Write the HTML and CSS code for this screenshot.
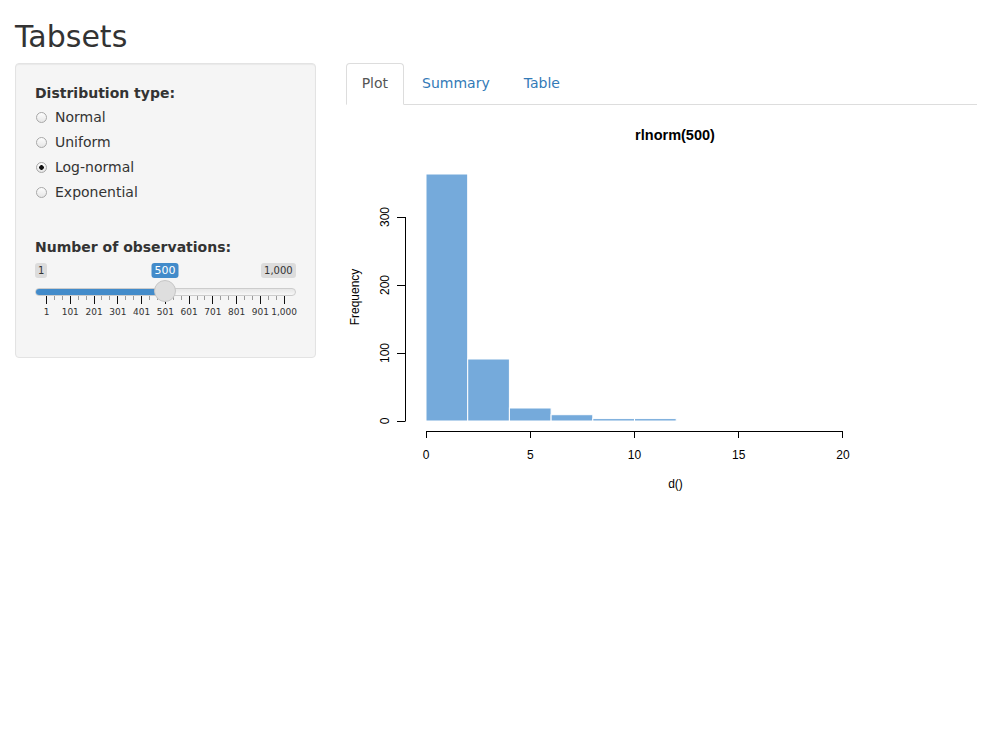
FILE: index.html
```html
<!DOCTYPE html>
<html lang="en">
<head>
<meta charset="utf-8">
<title>Tabsets</title>
<link rel="stylesheet" href="styles.css">
</head>
<body>
<div class="container">
  <h2 class="title">Tabsets</h2>
  <div class="row">
    <div class="sidebar">
      <form class="well">
        <div class="form-group radio-group">
          <label class="control-label">Distribution type:</label>
          <div class="options">
            <label class="radio"><input type="radio" name="dist" value="norm"><span>Normal</span></label>
            <label class="radio"><input type="radio" name="dist" value="unif"><span>Uniform</span></label>
            <label class="radio"><input type="radio" name="dist" value="lnorm" checked><span>Log-normal</span></label>
            <label class="radio"><input type="radio" name="dist" value="exp"><span>Exponential</span></label>
          </div>
        </div>
        <div class="form-group slider-group">
          <label class="control-label">Number of observations:</label>
          <div class="irs">
            <div class="irs-labels"><span class="irs-min">1</span><span class="irs-max">1,000</span></div>
            <div class="irs-line"><div class="irs-bar" style="width:130px"></div></div>
            <div class="irs-grid">
              <i class="pol big"></i><i class="pol"></i><i class="pol"></i>
              <i class="pol big"></i><i class="pol"></i><i class="pol"></i>
              <i class="pol big"></i><i class="pol"></i><i class="pol"></i>
              <i class="pol big"></i><i class="pol"></i><i class="pol"></i>
              <i class="pol big"></i><i class="pol"></i><i class="pol"></i>
              <i class="pol big"></i><i class="pol"></i><i class="pol"></i>
              <i class="pol big"></i><i class="pol"></i><i class="pol"></i>
              <i class="pol big"></i><i class="pol"></i><i class="pol"></i>
              <i class="pol big"></i><i class="pol"></i><i class="pol"></i>
              <i class="pol big"></i><i class="pol"></i><i class="pol"></i>
              <i class="pol big"></i>
            </div>
            <div class="irs-grid-text">
              <span><b>1</b></span><span><b>101</b></span><span><b>201</b></span><span><b>301</b></span><span><b>401</b></span><span><b>501</b></span><span><b>601</b></span><span><b>701</b></span><span><b>801</b></span><span><b>901</b></span><span><b>1,000</b></span>
            </div>
            <span class="irs-single" style="left:130px">500</span>
            <span class="irs-handle" style="left:119px"></span>
          </div>
        </div>
      </form>
    </div>
    <div class="main">
      <ul class="nav-tabs">
        <li class="active"><a href="#plot">Plot</a></li>
        <li><a href="#summary">Summary</a></li>
        <li><a href="#table">Table</a></li>
      </ul>
      <div class="tab-content">
        <svg class="plot" width="631" height="400" viewBox="0 0 631 400" xmlns="http://www.w3.org/2000/svg">
          <text class="plot-title" x="329" y="35" text-anchor="middle">rlnorm(500)</text>
          <g class="bars">
            <rect x="80" y="69" width="41.7" height="247"/>
            <rect x="121.7" y="254" width="41.7" height="62"/>
            <rect x="163.4" y="303" width="41.7" height="13"/>
            <rect x="205.1" y="309.7" width="41.7" height="6.3"/>
            <rect x="246.8" y="313.6" width="41.7" height="2.4"/>
            <rect x="288.5" y="313.6" width="41.7" height="2.4"/>
          </g>
          <g class="axis">
            <path d="M59.5 112 V316 M51 112.5 H59.5 M51 180.5 H59.5 M51 248.5 H59.5 M51 316.5 H59.5"/>
            <path d="M80 326.5 H497 M80.5 326 V333 M184.5 326 V333 M288.5 326 V333 M392.5 326 V333 M496.5 326 V333"/>
          </g>
          <g class="tick-labels">
            <text transform="translate(43,316) rotate(-90)" text-anchor="middle">0</text>
            <text transform="translate(43,248) rotate(-90)" text-anchor="middle">100</text>
            <text transform="translate(43,180) rotate(-90)" text-anchor="middle">200</text>
            <text transform="translate(43,112) rotate(-90)" text-anchor="middle">300</text>
            <text x="80" y="354" text-anchor="middle">0</text>
            <text x="184.25" y="354" text-anchor="middle">5</text>
            <text x="288.5" y="354" text-anchor="middle">10</text>
            <text x="392.75" y="354" text-anchor="middle">15</text>
            <text x="497" y="354" text-anchor="middle">20</text>
            <text x="329.5" y="383" text-anchor="middle">d()</text>
            <text transform="translate(13,192) rotate(-90)" text-anchor="middle">Frequency</text>
          </g>
        </svg>
      </div>
    </div>
  </div>
</div>
</body>
</html>
```

FILE: styles.css
```css
* { box-sizing: border-box; }

html, body {
  margin: 0;
  padding: 0;
  background: #fff;
}

body {
  font-family: "DejaVu Sans", "Liberation Sans", sans-serif;
  font-size: 14px;
  line-height: 20px;
  color: #333;
}

.container {
  padding: 0 15px;
}

.title {
  margin: 20px 0 10px;
  font-size: 30px;
  font-weight: 500;
  line-height: 33px;
}

.row {
  display: grid;
  grid-template-columns: calc(33.3333% - 20px) 1fr;
  column-gap: 30px;
  align-items: start;
}

/* ---------- sidebar well ---------- */
.well {
  margin: 0;
  padding: 19px;
  background: #f5f5f5;
  border: 1px solid #e3e3e3;
  border-radius: 4px;
  box-shadow: inset 0 1px 1px rgba(0, 0, 0, .05);
}

.control-label {
  display: block;
  font-weight: bold;
  margin-bottom: 5px;
}

.radio-group .control-label {
  margin-bottom: 4px;
}

.options {
  display: flex;
  flex-direction: column;
  gap: 5px;
}

.radio {
  display: flex;
  align-items: center;
  height: 20px;
  font-weight: normal;
  cursor: pointer;
}

.radio input {
  -webkit-appearance: none;
  appearance: none;
  width: 11px;
  height: 11px;
  margin: 0 8px 0 1px;
  border: 1px solid #a8a8a8;
  border-radius: 50%;
  background: linear-gradient(#fdfdfd, #e6e6e6);
  flex: none;
}

.radio input:checked {
  background: radial-gradient(circle, #111 0, #111 2px, rgba(0, 0, 0, 0) 2.6px), linear-gradient(#fdfdfd, #e6e6e6);
}

.slider-group {
  margin-top: 35px;
}

.slider-group .control-label {
  margin-bottom: 6px;
}

/* ---------- range slider ---------- */
.irs {
  position: relative;
  height: 60px;
  margin-bottom: 15px;
}

.irs-labels {
  display: flex;
  justify-content: space-between;
  height: 15px;
}

.irs-min,
.irs-max {
  font-size: 10px;
  line-height: 13px;
  padding: 1px 3px;
  background: rgba(0, 0, 0, .1);
  border-radius: 3px;
  color: #333;
}

.irs-single {
  position: absolute;
  top: 0;
  transform: translateX(-50%);
  font-size: 11px;
  line-height: 13px;
  padding: 1px 3px;
  background: #428bca;
  color: #fff;
  border-radius: 3px;
}

.irs-line {
  margin-top: 10px;
  height: 8px;
  border: 1px solid #ccc;
  border-radius: 16px;
  background: linear-gradient(to bottom, #dedede -50%, #fff 150%);
  overflow: hidden;
}

.irs-bar {
  background: #428bca;
  margin: -1px 0 0 -1px;
  height: 8px;
  border-radius: 8px 0 0 8px;
}

.irs-handle {
  position: absolute;
  top: 17px;
  width: 22px;
  height: 22px;
  border: 1px solid #c6c6c6;
  border-radius: 50%;
  background: #dedede;
}

.irs-grid {
  display: flex;
  justify-content: space-between;
  align-items: flex-start;
  margin: 0 11px;
  height: 8px;
}

.pol {
  display: block;
  width: 1px;
  height: 4px;
  background: #9a9a9a;
}

.pol.big {
  height: 8px;
  background: #111;
}

.irs-grid-text {
  display: flex;
  justify-content: space-between;
  margin: 4px 11px 0;
  font-size: 9px;
  line-height: 9px;
  color: #333;
}

.irs-grid-text span {
  width: 1px;
  display: flex;
  justify-content: center;
}

.irs-grid-text b {
  font-weight: normal;
  white-space: nowrap;
}

/* ---------- tabs ---------- */
.nav-tabs {
  display: flex;
  margin: 0;
  padding: 0;
  list-style: none;
  border-bottom: 1px solid #ddd;
}

.nav-tabs li {
  margin-bottom: -1px;
}

.nav-tabs a {
  display: block;
  padding: 9px 15px 11px;
  margin-right: 2px;
  line-height: 20px;
  border: 1px solid transparent;
  border-radius: 4px 4px 0 0;
  color: #337ab7;
  text-decoration: none;
}

.nav-tabs .active a {
  color: #555;
  background: #fff;
  border-color: #ddd #ddd transparent;
}

/* ---------- plot ---------- */
.plot {
  display: block;
}

.plot text {
  font-family: "Liberation Sans", Arial, sans-serif;
  font-size: 12px;
  fill: #000;
}

.plot .plot-title {
  font-size: 14.5px;
  font-weight: bold;
}

.bars rect {
  fill: #75aadb;
  stroke: #fff;
  stroke-width: 1;
}

.axis path {
  fill: none;
  stroke: #000;
  stroke-width: 1;
}
```
